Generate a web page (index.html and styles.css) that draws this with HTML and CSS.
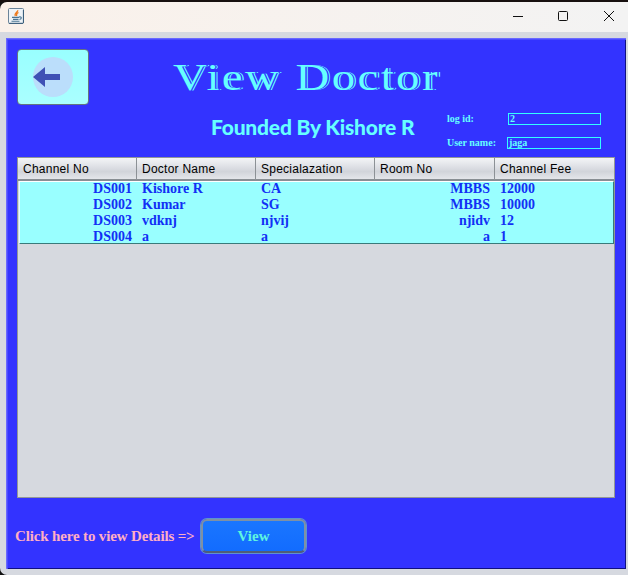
FILE: index.html
```html
<!DOCTYPE html>
<html lang="en">
<head>
<meta charset="utf-8">
<title>View Doctor</title>
<link rel="stylesheet" href="styles.css">
</head>
<body>
<div class="window">
  <header class="titlebar">
    <svg class="java" width="16" height="16" viewBox="0 0 16 16" fill="none">
      <rect x=".5" y=".5" width="15" height="15" rx="1" fill="#eef3f7" stroke="#6b8499"/>
      <path d="M1 15.3h14M15.4 2v13" stroke="#365b78"/>
      <path d="M9.8 2.2C10 4.2 6 5 7.2 8M10.5 4.5C8 5.5 8.2 6.5 8.7 8" stroke="#ee7a1c" stroke-width="1.3"/>
      <path d="M4 9.4h7M5 11.4h5.5M11 9c3-.7 3 2 .5 2.5M3.5 13.3h8" stroke="#4a7593" stroke-width="1.1"/>
    </svg>
    <svg class="controls" width="104" height="12" viewBox="0 0 104 12" fill="none" stroke="#111">
      <path d="M1 6.5h10"/>
      <rect x="46.5" y="1.5" width="9" height="9" rx="1"/>
      <path d="M92 1l10 10M102 1l-10 10"/>
    </svg>
  </header>
  <main class="panel">
    <section class="top">
      <button class="back" aria-label="Back">
        <svg width="40" height="40" viewBox="0 0 40 40"><circle cx="20" cy="20" r="20" fill="#bbdefb"/><path d="M0 20L12 10v7h15v6H12v7z" fill="#3f51b5"/></svg>
      </button>
      <div class="heading">
        <h1>View Doctor</h1>
        <h2>Founded By Kishore R</h2>
      </div>
      <div class="user">
        <span>log id:</span><div class="field id">2</div>
        <span>User name:</span><div class="field">jaga</div>
      </div>
    </section>
    <section class="pane">
      <div class="row head"><div>Channel No</div><div>Doctor Name</div><div>Specialazation</div><div>Room No</div><div>Channel Fee</div></div>
      <div class="records">
        <div class="row"><div>DS001</div><div>Kishore R</div><div>CA</div><div>MBBS</div><div>12000</div></div>
        <div class="row"><div>DS002</div><div>Kumar</div><div>SG</div><div>MBBS</div><div>10000</div></div>
        <div class="row"><div>DS003</div><div>vdknj</div><div>njvij</div><div>njidv</div><div>12</div></div>
        <div class="row"><div>DS004</div><div>a</div><div>a</div><div>a</div><div>1</div></div>
      </div>
    </section>
    <footer class="bottom"><span class="prompt">Click here to view Details =&gt;</span><button class="view">View</button></footer>
  </main>
</div>
</body>
</html>
```

FILE: styles.css
```css
* { box-sizing: border-box; }
body { margin: 0; background: #111; overflow: hidden; }
button { padding: 0; font: inherit; }
.window { height: 575px; padding-top: 2px; background: linear-gradient(#17100f 0 2px, transparent 2px); }
.titlebar { height: 30px; padding: 0 12px 0 8px; display: flex; justify-content: space-between; align-items: center; background: linear-gradient(90deg, #faf1ea, #f3f3f3); border-radius: 7px 0 0 0; }
.java { margin-bottom: 2px; }
.controls { margin-bottom: 2px; }
.panel {
  height: 543px; border: solid #d6d9e0; border-width: 6px 2px 6px 6px; border-bottom-left-radius: 7px;
  background: #33f; box-shadow: inset 1px 1px #6868ff, inset 2px 2px #4a4aff, inset -1px -1px #101080;
  font-family: "Liberation Serif", serif; font-weight: bold;
}
.top { height: 119px; display: grid; grid-template-columns: 72px 341px 1fr; padding: 11px 0 0 11px; }
.back { width: 72px; height: 56px; background: linear-gradient(#9ff, #aff); border: 1px solid #647580; border-radius: 4px; display: flex; align-items: center; justify-content: center; }
h1, h2 { margin: 0; color: #6ff; white-space: nowrap; }
h1 { margin: 5px 0 0 84px; font-size: 38px; font-weight: normal; line-height: 46px; text-shadow: 1.2px 0 #33f, 2.2px 0 #6ff; letter-spacing: 2px; transform: scaleX(1.23); transform-origin: left; }
h2 { margin: 14px 0 0 122px; font: 900 21px/26px Lato, sans-serif; letter-spacing: -.2px; }
.user { display: grid; grid-template-columns: 60px 94px; grid-template-rows: 12px 12px; row-gap: 12px; padding: 64px 0 0 17px; color: #6ff; font-size: 10px; line-height: 12px; }
.field { border: 1px solid #3ff; line-height: 9px; padding-left: 1px; }
.field.id { margin-left: 1px; }
.pane { width: 598px; height: 341px; margin-left: 11px; background: #d6d9df; border: 1px solid #929797; }
.row { display: grid; grid-template-columns: 119px 119px 119px 120px 1fr; }
.head { height: 23px; background: linear-gradient(#f4f5f7, #dfe1e6 40%, #d1d4da 65%, #e4e6ea); border-bottom: 2px solid #888e93; font: 12px/22px "Liberation Sans", sans-serif; letter-spacing: .25px; color: #000; }
.head div { padding-left: 5px; border-right: 1px solid #8c9196; }
.head div:last-child { border: 0; }
.records { margin: 0 0 0 1px; height: 63px; border: 1px solid #397b7b; border-top-color: #fff; border-left-color: #e8ffff; background: #9ff; color: #1230f5; font-size: 14px; line-height: 16px; }
.records .row { height: 16px; margin-left: -2px; margin-right: -1px; position: relative; top: -1px; }
.records .row div { padding-left: 5px; }
.records .row div:nth-child(1), .records .row div:nth-child(4) { text-align: right; padding: 0 5px 0 0; }
.bottom { height: 71px; display: flex; align-items: center; padding: 5px 0 0 9px; }
.prompt { width: 186px; color: #ffaec4; font-size: 15px; letter-spacing: -.15px; white-space: nowrap; }
.view { width: 105px; height: 34px; border: 2px solid #7e91a4; border-bottom-color: #505e78; border-radius: 6px; background: linear-gradient(#1a76ff, #126cff); color: #5ff5df; font-size: 15px; box-shadow: 0 0 0 1px #5d92d1; }
```
